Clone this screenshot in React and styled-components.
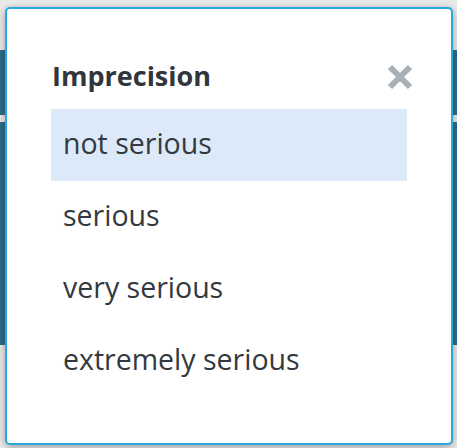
import React, { useState } from "react";
import styled, { createGlobalStyle } from "styled-components";

const GlobalStyle = createGlobalStyle`
  html, body {
    margin: 0;
    padding: 0;
    background: #ebebeb;
    font-family: "Open Sans", "Noto Sans", sans-serif;
  }
`;

const Page = styled("div")`
  position: relative;
  width: 457px;
  height: 448px;
  overflow: hidden;
  padding-top: 50px;
  box-sizing: border-box;
`;

const Band = styled("div")`
  height: ${(p) => p.h}px;
  margin-bottom: 7px;
  background: #2e6e8a;
`;

const Modal = styled("div")`
  position: absolute;
  top: 7px;
  left: 5px;
  width: 448px;
  height: 438px;
  box-sizing: border-box;
  background: #fff;
  border: 2px solid #29a8e0;
  border-radius: 5px;
  box-shadow: 0 2px 8px rgba(0, 0, 0, 0.35);
  padding: 44px 44px 0 44px;
`;

const Header = styled("header")`
  display: flex;
  align-items: center;
  justify-content: space-between;
  height: 44px;
  margin-bottom: 12px;
`;

const Title = styled("h2")`
  margin: 0;
  padding-left: 1px;
  font-size: 27px;
  font-weight: 700;
  color: #30363b;
`;

const CloseButton = styled("button")`
  display: flex;
  align-items: center;
  justify-content: center;
  width: 26px;
  height: 26px;
  margin-right: -6px;
  margin-top: 4px;
  padding: 0;
  border: none;
  background: none;
  cursor: pointer;
`;

const List = styled("ul")`
  list-style: none;
  margin: 0;
  padding: 0;
`;

const Option = styled("li")`
  display: flex;
  align-items: center;
  height: 72px;
  box-sizing: border-box;
  padding: 0 0 5px 12px;
  font-size: 28.5px;
  color: #33393e;
  background: ${(p) => (p.active ? "#dce9f8" : "transparent")};
  cursor: pointer;
`;

const options = ["not serious", "serious", "very serious", "extremely serious"];

function App() {
  const [selected, setSelected] = useState(0);

  return (
    <>
      <GlobalStyle />
      <Page>
        <Band h={65} />
        <Band h={223} />
        <Modal>
          <Header>
            <Title>Imprecision</Title>
            <CloseButton type="button" aria-label="close">
              <svg width="26" height="26" viewBox="0 0 26 26">
                <path
                  d="M3 3 L23 23 M23 3 L3 23"
                  stroke="#a8afb5"
                  strokeWidth="6"
                  strokeLinecap="butt"
                />
              </svg>
            </CloseButton>
          </Header>
          <List>
            {options.map((o, i) => (
              <Option key={o} active={i === selected} onClick={() => setSelected(i)}>
                {o}
              </Option>
            ))}
          </List>
        </Modal>
      </Page>
    </>
  );
}

export default App;
